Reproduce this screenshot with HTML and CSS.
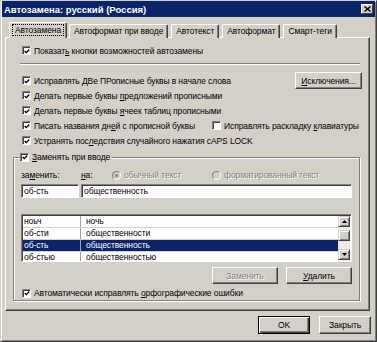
FILE: index.html
```html
<!DOCTYPE html>
<html lang="ru">
<head>
  <meta charset="UTF-8" />
  <title>Автозамена: русский (Россия)</title>
  <link rel="stylesheet" href="styles.css">
</head>
<body>

  <div class="window">
    <div class="titlebar">
      <span class="title">Автозамена: русский (Россия)</span>
      <span class="close">
        <svg width="7" height="6" viewBox="0 0 7 6"><path d="M0.5 0.5 L6.5 5.5 M6.5 0.5 L0.5 5.5" stroke="#000" stroke-width="1.4" fill="none"/></svg>
      </span>
    </div>

    <div class="tabs">
      <div class="tab active"><span class="focus">Автозамена</span></div>
      <div class="tab">Автоформат при вводе</div>
      <div class="tab">Автотекст</div>
      <div class="tab">Автоформат</div>
      <div class="tab">Смарт-теги</div>
    </div>

    <div class="panel">
      <div class="row">
        <span class="cb"><svg width="7" height="7" viewBox="0 0 7 7"><path d="M0.8 3 L2.6 4.8 L6.2 1.2" stroke="#000" stroke-width="1.6" fill="none"/></svg></span>
        <span>Показат<u>ь</u> кнопки возможностей автозамены</span>
      </div>

      <div class="sep"></div>

      <div class="row row-first">
        <span class="cb"><svg width="7" height="7" viewBox="0 0 7 7"><path d="M0.8 3 L2.6 4.8 L6.2 1.2" stroke="#000" stroke-width="1.6" fill="none"/></svg></span>
        <span class="grow">Исправлять <u>Д</u>Ве ПРописные буквы в начале слова</span>
        <button class="btn btn-exc"><u>И</u>сключения...</button>
      </div>
      <div class="row">
        <span class="cb"><svg width="7" height="7" viewBox="0 0 7 7"><path d="M0.8 3 L2.6 4.8 L6.2 1.2" stroke="#000" stroke-width="1.6" fill="none"/></svg></span>
        <span>Делать первые буквы <u>п</u>редложений прописными</span>
      </div>
      <div class="row">
        <span class="cb"><svg width="7" height="7" viewBox="0 0 7 7"><path d="M0.8 3 L2.6 4.8 L6.2 1.2" stroke="#000" stroke-width="1.6" fill="none"/></svg></span>
        <span>Делать первые буквы <u>я</u>чеек таблиц прописными</span>
      </div>
      <div class="row">
        <div class="half">
          <span class="cb"><svg width="7" height="7" viewBox="0 0 7 7"><path d="M0.8 3 L2.6 4.8 L6.2 1.2" stroke="#000" stroke-width="1.6" fill="none"/></svg></span>
          <span>Писать названия дн<u>е</u>й с прописной буквы</span>
        </div>
        <span class="cb"></span>
        <span>Исправлять раскладку <u>к</u>лавиатуры</span>
      </div>
      <div class="row">
        <span class="cb"><svg width="7" height="7" viewBox="0 0 7 7"><path d="M0.8 3 L2.6 4.8 L6.2 1.2" stroke="#000" stroke-width="1.6" fill="none"/></svg></span>
        <span>Устранять пос<u>л</u>едствия случайного нажатия cAPS LOCK</span>
      </div>

      <fieldset class="group">
        <legend>
          <span class="cb"><svg width="7" height="7" viewBox="0 0 7 7"><path d="M0.8 3 L2.6 4.8 L6.2 1.2" stroke="#000" stroke-width="1.6" fill="none"/></svg></span>
          <span><u>З</u>аменять при вводе</span>
        </legend>

        <div class="labels">
          <span class="col-from">за<u>м</u>енить:</span>
          <span class="col-to"><u>н</u>а:</span>
          <span class="radio-item">
            <span class="radio on"></span>
            <span class="disabled">обычный текст</span>
          </span>
          <span class="radio-item last">
            <span class="radio"></span>
            <span class="disabled">форматированный текст</span>
          </span>
        </div>

        <div class="inputs">
          <div class="field field-from">об-сть</div>
          <div class="field field-to">общественность</div>
        </div>

        <div class="listbox">
          <div class="rows">
            <div class="item"><span class="c1">ноьч</span><span class="c2">ночь</span></div>
            <div class="item"><span class="c1">об-сти</span><span class="c2">общественности</span></div>
            <div class="item selected"><span class="c1">об-сть</span><span class="c2">общественность</span></div>
            <div class="item"><span class="c1">об-стью</span><span class="c2">общественностью</span></div>
          </div>
          <div class="scrollbar">
            <div class="sb-btn"><svg width="5" height="3" viewBox="0 0 5 3"><path d="M2.5 0 L5 3 L0 3 Z" fill="#000"/></svg></div>
            <div class="sb-track">
              <div class="sb-thumb"></div>
            </div>
            <div class="sb-btn"><svg width="5" height="3" viewBox="0 0 5 3"><path d="M0 0 L5 0 L2.5 3 Z" fill="#000"/></svg></div>
          </div>
        </div>

        <div class="list-buttons">
          <button class="btn disabled">Заменить</button>
          <button class="btn"><u>У</u>далить</button>
        </div>

        <div class="row row-last">
          <span class="cb"><svg width="7" height="7" viewBox="0 0 7 7"><path d="M0.8 3 L2.6 4.8 L6.2 1.2" stroke="#000" stroke-width="1.6" fill="none"/></svg></span>
          <span>Автоматически исправлять <u>о</u>рфографические ошибки</span>
        </div>
      </fieldset>
    </div>

    <div class="footer">
      <button class="btn btn-default">OK</button>
      <button class="btn btn-foot">Закрыть</button>
    </div>
  </div>

</body>
</html>
```

FILE: styles.css
```css
/* Диалог в стиле Windows 2000 */
* {
  box-sizing: border-box;
  margin: 0;
  padding: 0;
}

body {
  width: 377px;
  height: 342px;
  overflow: hidden;
  background: #d4d0c8;
  font-family: 'Liberation Sans', Arial, sans-serif;
  font-size: 8.5px;
  letter-spacing: -0.1px;
  color: #000;
}

u {
  text-decoration: underline;
  text-underline-offset: 1px;
}

.window {
  width: 377px;
  height: 342px;
  background: #d4d0c8;
  border: 1px solid;
  border-color: #d4d0c8 #404040 #404040 #d4d0c8;
  box-shadow: inset 1px 1px #fff, inset -1px -1px #808080;
  padding: 0 1px;
}

/* заголовок */
.titlebar {
  height: 16px;
  background: #0a246a;
  display: flex;
  align-items: center;
  justify-content: space-between;
  padding: 0 2px 0 2px;
}

.title {
  color: #fff;
  font-weight: bold;
  font-size: 9.5px;
  letter-spacing: 0;
}

.close {
  width: 12px;
  height: 10px;
  background: #d4d0c8;
  border: 1px solid;
  border-color: #fff #404040 #404040 #fff;
  display: flex;
  align-items: center;
  justify-content: center;
}

/* вкладки */
.tabs {
  display: flex;
  align-items: flex-end;
  height: 16px;
  margin-top: 5px;
  padding-left: 7px;
  position: relative;
  z-index: 2;
  margin-bottom: -1px;
  white-space: nowrap;
}

.tab {
  height: 14px;
  padding: 0 4px;
  line-height: 12px;
  border: 1px solid;
  border-bottom: none;
  border-color: #fff #404040 #404040 #fff;
  box-shadow: inset -1px 0 #808080;
  border-radius: 2px 2px 0 0;
  background: #d4d0c8;
  margin-left: 3px;
}

.tab.active {
  height: 16px;
  margin-left: 0;
  padding: 0 3px;
  line-height: 14px;
}

.tab.active + .tab {
  margin-left: 2px;
}

.focus {
  outline: 1px dotted #000;
  outline-offset: 0;
  padding: 0 2px;
}

/* панель вкладки */
.panel {
  margin-left: 3px;
  width: 365px;
  height: 274px;
  border: 1px solid;
  border-color: #fff #404040 #404040 #fff;
  box-shadow: inset -1px -1px #808080;
  padding: 5px 9px 0 7px;
}

.row {
  display: flex;
  align-items: center;
  height: 15px;
  padding-left: 9px;
  white-space: nowrap;
}

.row-first {
  margin-top: 8px;
}

.grow {
  flex: 1;
}

.half {
  display: flex;
  align-items: center;
  width: 190px;
}

.cb {
  width: 9px;
  height: 9px;
  flex: none;
  background: #fff;
  border: 1px solid;
  border-color: #808080 #fff #fff #808080;
  box-shadow: inset 1px 1px #404040;
  display: flex;
  align-items: center;
  justify-content: center;
  padding: 1px 0 0 1px;
  margin-right: 3px;
}

.sep {
  margin: 5px 0 0 7px;
  height: 2px;
  border-top: 1px solid #808080;
  border-bottom: 1px solid #fff;
}

/* кнопки */
.btn {
  font-family: inherit;
  font-size: 8.5px;
  letter-spacing: -0.1px;
  color: #000;
  background: #d4d0c8;
  border: 1px solid;
  border-color: #fff #404040 #404040 #fff;
  box-shadow: inset -1px -1px #808080;
  height: 17px;
  width: 66px;
}

.btn.disabled {
  color: #808080;
  text-shadow: 1px 1px #fff;
}

.btn-exc {
  width: 67px;
  margin-right: -2px;
}

/* группа */
.group {
  margin-top: 2px;
  border: 1px solid #808080;
  box-shadow: 1px 1px #fff, inset 1px 1px #fff;
  padding: 5px 7px 0 7px;
  height: 151px;
}

.group legend {
  display: flex;
  align-items: center;
  height: 14px;
  margin-left: -1px;
  padding-right: 2px;
  background: #d4d0c8;
}

.labels {
  display: flex;
  align-items: center;
  height: 12px;
  white-space: nowrap;
}

.col-from {
  flex: none;
  width: 60px;
}

.col-to {
  flex: none;
  width: 31px;
}

.radio-item {
  flex: none;
  width: 100px;
  display: flex;
  align-items: center;
}

.radio-item.last {
  flex: 1;
  width: auto;
}

.radio {
  width: 9px;
  height: 9px;
  flex: none;
  border-radius: 50%;
  border: 1px solid;
  border-color: #808080 #fff #fff #808080;
  background: #d4d0c8;
  margin-right: 3px;
  display: flex;
  align-items: center;
  justify-content: center;
}

.radio.on::after {
  content: "";
  width: 3px;
  height: 3px;
  border-radius: 50%;
  background: #808080;
}

.disabled {
  color: #808080;
  text-shadow: 1px 1px #fff;
}

.inputs {
  display: flex;
  gap: 2px;
  margin-top: 3px;
}

.field {
  height: 14px;
  background: #fff;
  border: 1px solid;
  border-color: #808080 #fff #fff #808080;
  box-shadow: inset 1px 1px #404040;
  padding: 0 2px;
  line-height: 12px;
}

.field-from {
  width: 58px;
}

.field-to {
  flex: 1;
}

/* список */
.listbox {
  margin-top: 16px;
  height: 48px;
  background: #fff;
  border: 1px solid;
  border-color: #808080 #fff #fff #808080;
  box-shadow: inset 1px 1px #404040;
  padding: 1px 1px 0 1px;
  display: flex;
  overflow: hidden;
}

.rows {
  flex: 1;
}

.item {
  display: flex;
  height: 12px;
  line-height: 11px;
  border-bottom: 1px solid #d4d0c8;
}

.item .c1 {
  width: 58px;
  padding-left: 1px;
  border-right: 1px solid #a0a0a0;
}

.item .c2 {
  padding-left: 5px;
}

.item.selected {
  background: #0a246a;
  color: #fff;
}

.scrollbar {
  width: 12px;
  display: flex;
  flex-direction: column;
  margin-bottom: 1px;
}

.sb-btn {
  height: 11px;
  background: #d4d0c8;
  border: 1px solid;
  border-color: #d4d0c8 #404040 #404040 #d4d0c8;
  box-shadow: inset 1px 1px #fff, inset -1px -1px #808080;
  display: flex;
  align-items: center;
  justify-content: center;
}

.sb-track {
  flex: 1;
  background: #eeece8;
  padding-top: 3px;
}

.sb-thumb {
  height: 11px;
  background: #d4d0c8;
  border: 1px solid;
  border-color: #d4d0c8 #404040 #404040 #d4d0c8;
  box-shadow: inset 1px 1px #fff, inset -1px -1px #808080;
}

.list-buttons {
  display: flex;
  justify-content: flex-end;
  gap: 8px;
  margin-top: 5px;
}

.list-buttons .btn {
  height: 17px;
}

.row-last {
  margin-top: 2px;
  padding-left: 1px;
  height: 14px;
}

/* нижние кнопки */
.footer {
  display: flex;
  justify-content: flex-end;
  gap: 9px;
  margin-top: 5px;
  padding-right: 4px;
}

.btn-default,
.btn-foot {
  width: 52px;
  height: 18px;
}

.btn-default {
  border: 1px solid #000;
  box-shadow: inset 1px 1px #fff, inset -1px -1px #404040, inset -2px -2px #808080;
}
```
